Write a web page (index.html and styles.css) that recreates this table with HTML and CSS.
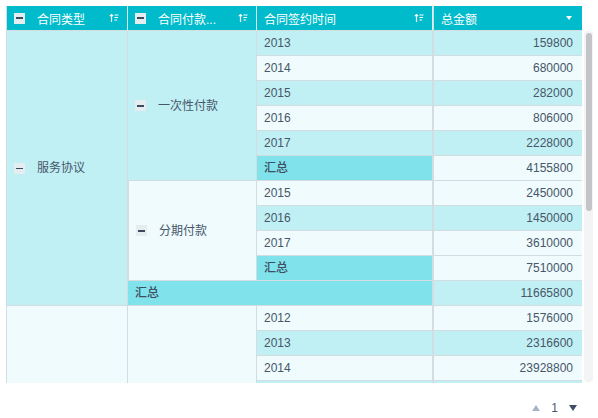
FILE: index.html
```html
<!DOCTYPE html>
<html lang="zh">
<head>
<meta charset="utf-8">
<link rel="stylesheet" href="styles.css">
</head>
<body>
<div class="sheet">
  <div class="clip">
    <table class="pivot">
      <colgroup>
        <col class="c1"><col class="c2"><col class="c3"><col class="c4">
      </colgroup>
      <thead>
        <tr>
          <th><div class="hd"><span class="fold"></span><span class="lbl">合同类型</span><svg class="sort" viewBox="0 0 10 10" width="10" height="10"><path d="M2.5 9V1.5M0.8 3.2L2.5 1.5 4.2 3.2M5.5 2h4M5.5 4.5h3.5M5.5 7h2.6" stroke="#fff" stroke-width="1.2" fill="none"/></svg></div></th>
          <th><div class="hd"><span class="fold"></span><span class="lbl">合同付款...</span><svg class="sort" viewBox="0 0 10 10" width="10" height="10"><path d="M2.5 9V1.5M0.8 3.2L2.5 1.5 4.2 3.2M5.5 2h4M5.5 4.5h3.5M5.5 7h2.6" stroke="#fff" stroke-width="1.2" fill="none"/></svg></div></th>
          <th><div class="hd"><span class="lbl plain">合同签约时间</span><svg class="sort" viewBox="0 0 10 10" width="10" height="10"><path d="M2.5 9V1.5M0.8 3.2L2.5 1.5 4.2 3.2M5.5 2h4M5.5 4.5h3.5M5.5 7h2.6" stroke="#fff" stroke-width="1.2" fill="none"/></svg></div></th>
          <th class="val-h"><div class="hd"><span class="lbl plain">总金额</span><span class="caret"></span></div></th>
        </tr>
      </thead>
      <tbody>
        <tr>
          <td rowspan="11" class="rh cy"><span class="fold"></span><span class="rl">服务协议</span></td>
          <td rowspan="6" class="rh cy"><span class="fold"></span><span class="rl">一次性付款</span></td>
          <td class="yr cy">2013</td><td class="num cy">159800</td>
        </tr>
        <tr><td class="yr lt">2014</td><td class="num lt">680000</td></tr>
        <tr><td class="yr cy">2015</td><td class="num cy">282000</td></tr>
        <tr><td class="yr lt">2016</td><td class="num lt">806000</td></tr>
        <tr><td class="yr cy">2017</td><td class="num cy">2228000</td></tr>
        <tr><td class="yr sum">汇总</td><td class="num lt">4155800</td></tr>
        <tr>
          <td rowspan="4" class="rh lt"><span class="fold"></span><span class="rl">分期付款</span></td>
          <td class="yr lt">2015</td><td class="num lt">2450000</td>
        </tr>
        <tr><td class="yr cy">2016</td><td class="num cy">1450000</td></tr>
        <tr><td class="yr lt">2017</td><td class="num lt">3610000</td></tr>
        <tr><td class="yr sum">汇总</td><td class="num lt">7510000</td></tr>
        <tr><td colspan="2" class="yr sum total">汇总</td><td class="num cy">11665800</td></tr>
        <tr>
          <td rowspan="4" class="rh lt"></td>
          <td rowspan="4" class="rh lt"></td>
          <td class="yr lt">2012</td><td class="num lt">1576000</td>
        </tr>
        <tr><td class="yr cy">2013</td><td class="num cy">2316600</td></tr>
        <tr><td class="yr lt">2014</td><td class="num lt">23928800</td></tr>
        <tr><td class="yr cy empty"></td><td class="num cy empty"></td></tr>
      </tbody>
    </table>
  </div>
  <div class="scroll"><div class="thumb"></div></div>
</div>
<div class="pager">
  <span class="tri up"></span>
  <span class="page">1</span>
  <span class="tri down"></span>
</div>
</body>
</html>
```

FILE: styles.css
```css
html, body {
  margin: 0;
  padding: 0;
  background: #ffffff;
}
body {
  font-family: "Liberation Sans", "Noto Sans CJK SC", sans-serif;
  font-size: 12px;
  color: #475669;
}
.sheet {
  display: flex;
  align-items: flex-start;
  padding: 6px 0 0 6px;
}
.clip {
  width: 576px;
  height: 377px;
  overflow: hidden;
}
.pivot {
  width: 576px;
  table-layout: fixed;
  border-collapse: separate;
  border-spacing: 0;
}
.c1 { width: 122px; }
.c2 { width: 129px; }
.c3 { width: 176px; }
.c4 { width: 149px; }
.pivot th {
  background: #00bbcb;
  color: #ffffff;
  font-weight: normal;
  height: 24px;
  padding: 0;
  border-bottom: 1px solid #d3dde1;
  border-right: 1px solid #d8f0f3;
  text-align: left;
}
.pivot th:first-child { border-left: 1px solid #d3dde1; }
.pivot th.val-h { border-left: 1px solid #d3dde1; border-right: none; }
.hd {
  display: flex;
  align-items: center;
  height: 24px;
  padding: 0 8px 0 7px;
}
.hd .lbl { flex: 1; margin-left: 12px; white-space: nowrap; }
.hd .lbl.plain { margin-left: 0; }
.fold {
  display: inline-flex;
  align-items: center;
  justify-content: center;
  width: 11px;
  height: 11px;
  background: #e6edf1;
  flex: none;
}
.fold::before {
  content: "";
  width: 7px;
  height: 1.5px;
  background: #3d4b5e;
}
.sort { flex: none; }
.caret {
  width: 0;
  height: 0;
  border-left: 3.5px solid transparent;
  border-right: 3.5px solid transparent;
  border-top: 4px solid #ffffff;
  margin-right: 2px;
}
.pivot td {
  padding: 0 7px;
  height: 24px;
  line-height: 24px;
  border-bottom: 1px solid #d3dde1;
  border-right: 1px solid #d3dde1;
  white-space: nowrap;
}
.pivot td.rh {
  vertical-align: middle;
}
.pivot td.rh:first-child { border-left: 1px solid #d3dde1; }
.rh .fold { vertical-align: middle; }
.rh .rl { margin-left: 12px; vertical-align: middle; }
.pivot td.num {
  text-align: right;
  padding-right: 9px;
  border-left: 1px solid #d3dde1;
  border-right: none;
}
.cy { background: #c1f0f4; }
.lt { background: #effbfc; }
.sum { background: #80e2ea; font-weight: 500; color: #3f4e63; }
.scroll {
  width: 9px;
  height: 351px;
  margin: 25px 0 0 2px;
  background: #f3f4f5;
  border-radius: 4px;
  display: flex;
  justify-content: center;
}
.thumb {
  width: 6px;
  height: 178px;
  margin-top: 2px;
  background: #c3c5c8;
  border-radius: 3px;
}
.pager {
  display: flex;
  justify-content: flex-end;
  align-items: center;
  gap: 11px;
  margin-top: 18px;
  padding-right: 21px;
  height: 14px;
}
.page { font-size: 12px; color: #4a5a70; line-height: 14px; }
.tri {
  width: 0;
  height: 0;
  border-left: 4px solid transparent;
  border-right: 4px solid transparent;
}
.tri.up { border-bottom: 6px solid #a6b5c4; }
.tri.down { border-top: 6px solid #3e4e66; }
```
